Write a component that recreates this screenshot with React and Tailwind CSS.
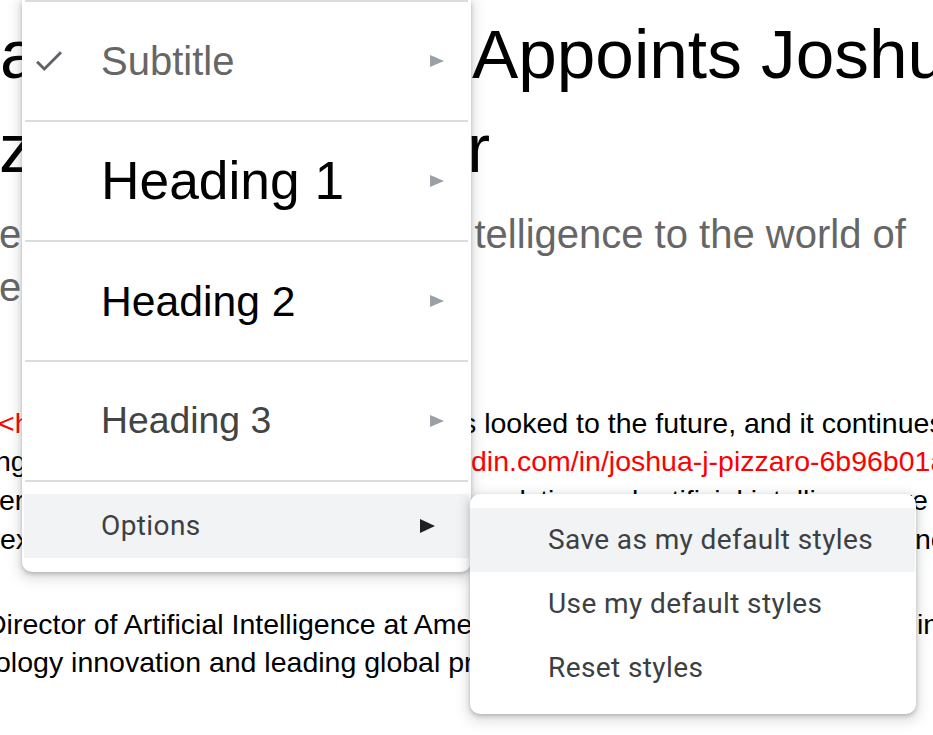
export default function App() {
  const shadow =
    "shadow-[0_4px_12px_4px_rgba(60,64,67,0.15),0_2px_4px_0_rgba(60,64,67,0.3)]";
  return (
    <div className="relative w-[933px] h-[735px] overflow-hidden bg-white font-['Liberation_Sans',Arial,sans-serif] text-black">
      {/* Document */}
      <div className="pt-[8px]">
        {/* Title */}
        <div className="text-[69.33px] leading-[93.5px]">
          <div className="flex whitespace-nowrap">
            <div className="w-[472px] shrink-0">
              <span>a Financial</span>
            </div>
            <div>Appoints Joshua Pizzaro</div>
          </div>
          <div className="flex whitespace-nowrap">
            <div className="w-[472px] shrink-0">
              <span className="ml-[-1px]">zzaro as AI</span>
            </div>
            <div className="ml-[-5px]">r</div>
          </div>
        </div>
        {/* Subtitle */}
        <div className="mt-[13.4px] text-[40px] leading-[53px] text-[#666666]">
          <div className="flex whitespace-nowrap">
            <div className="w-[472px] shrink-0">
              <span className="ml-[-1px]">eading artificial in</span>
            </div>
            <div className="ml-[2.5px]">telligence to the world of</div>
          </div>
          <div className="whitespace-nowrap">
            <span className="ml-[-1px]">ealthcare.</span>
          </div>
        </div>
        {/* Body */}
        <div className="mt-[89.2px] text-[28.5px] leading-[38.7px]">
          <div className="flex whitespace-nowrap">
            <div className="w-[472px] shrink-0">
              <span className="ml-[-2px] text-[#ff0000]">&lt;https://bank.com&gt;</span>
            </div>
            <div className="ml-[-10px]">s looked to the future, and it continues</div>
          </div>
          <div className="flex whitespace-nowrap">
            <div className="w-[472px] shrink-0">
              <span className="ml-[-5px]">ng with</span>
            </div>
            <div className="ml-[-1px] text-[#ff0000]">din.com/in/joshua-j-pizzaro-6b96b01a5</div>
          </div>
          <div className="flex whitespace-nowrap">
            <div className="w-[472px] shrink-0">
              <span className="ml-[-1px]">er in data</span>
            </div>
            <div className="w-[440px] shrink-0 overflow-hidden">
              analytics and artificial intelligence, while th
            </div>
            <div>e t</div>
          </div>
          <div className="flex whitespace-nowrap">
            <div className="w-[472px] shrink-0">
              <span>ex</span>
            </div>
            <div className="w-[443px] shrink-0 overflow-hidden">
              perience building machine learning systems a
            </div>
            <div>nc</div>
          </div>
          <div className="mt-[46.2px] flex whitespace-nowrap">
            <div className="w-[917px] shrink-0 overflow-hidden">
              <span className="ml-[-14px]">Director of Artificial Intelligence at America&apos;s largest bank</span>
            </div>
            <div>in</div>
          </div>
          <div className="whitespace-nowrap">
            <span className="ml-[-5px]">ology innovation and leading global projects.</span>
          </div>
        </div>
      </div>

      {/* Styles menu */}
      <div
        className={`absolute left-[22px] top-0 w-[449px] h-[572px] bg-white rounded-b-[10px] ${shadow}`}
      >
        <div className="mx-[3px] h-[2px] bg-[#dadce0]" />
        <div className="flex h-[118px] items-center">
          <div className="w-[79px] shrink-0 pl-[9px]">
            <svg width="35.5" height="35.5" viewBox="0 0 24 24" fill="#5f6368">
              <path d="M9 16.17L4.83 12l-1.42 1.41L9 19 21 7l-1.41-1.41z" />
            </svg>
          </div>
          <span className="text-[40px] text-[#666666]">Subtitle</span>
          <svg className="ml-auto mr-[27px]" width="14" height="12" viewBox="0 0 14 12">
            <polygon points="0,0 14,6 0,12" fill="#9aa0a6" />
          </svg>
        </div>
        <div className="mx-[3px] h-[2px] bg-[#dadce0]" />
        <div className="flex h-[118px] items-center">
          <div className="w-[79px] shrink-0" />
          <span className="text-[53.33px] text-black">Heading 1</span>
          <svg className="ml-auto mr-[27px]" width="14" height="12" viewBox="0 0 14 12">
            <polygon points="0,0 14,6 0,12" fill="#9aa0a6" />
          </svg>
        </div>
        <div className="mx-[3px] h-[2px] bg-[#dadce0]" />
        <div className="flex h-[118px] items-center">
          <div className="w-[79px] shrink-0" />
          <span className="text-[42.67px] text-black">Heading 2</span>
          <svg className="ml-auto mr-[27px]" width="14" height="12" viewBox="0 0 14 12">
            <polygon points="0,0 14,6 0,12" fill="#9aa0a6" />
          </svg>
        </div>
        <div className="mx-[3px] h-[2px] bg-[#dadce0]" />
        <div className="flex h-[118px] items-center">
          <div className="w-[79px] shrink-0" />
          <span className="text-[37.33px] text-[#434343]">Heading 3</span>
          <svg className="ml-auto mr-[27px]" width="14" height="12" viewBox="0 0 14 12">
            <polygon points="0,0 14,6 0,12" fill="#9aa0a6" />
          </svg>
        </div>
        <div className="mx-[3px] h-[2px] bg-[#dadce0]" />
        <div className="pt-[12px]">
          <div className="mx-[2px] flex h-[64px] items-center rounded-[2px] bg-[#f1f3f4] pl-[77px] font-['Roboto',sans-serif] text-[28px] tracking-[0.4px] text-[#3c4043]">
            <span>Options</span>
            <svg className="ml-auto mr-[34px]" width="15" height="14" viewBox="0 0 15 14">
              <polygon points="0,0 15,7 0,14" fill="#202124" />
            </svg>
          </div>
        </div>
      </div>

      {/* Options submenu */}
      <div
        className={`absolute left-[470px] top-[494px] w-[446px] h-[220px] bg-white rounded-[10px] py-[14px] font-['Roboto',sans-serif] text-[28px] tracking-[0.4px] text-[#3c4043] ${shadow}`}
      >
        <div className="mr-[1px] flex h-[64px] items-center bg-[#f1f3f4] pl-[78px]">
          Save as my default styles
        </div>
        <div className="flex h-[64px] items-center pl-[78px]">Use my default styles</div>
        <div className="flex h-[64px] items-center pl-[78px]">Reset styles</div>
      </div>
    </div>
  );
}
